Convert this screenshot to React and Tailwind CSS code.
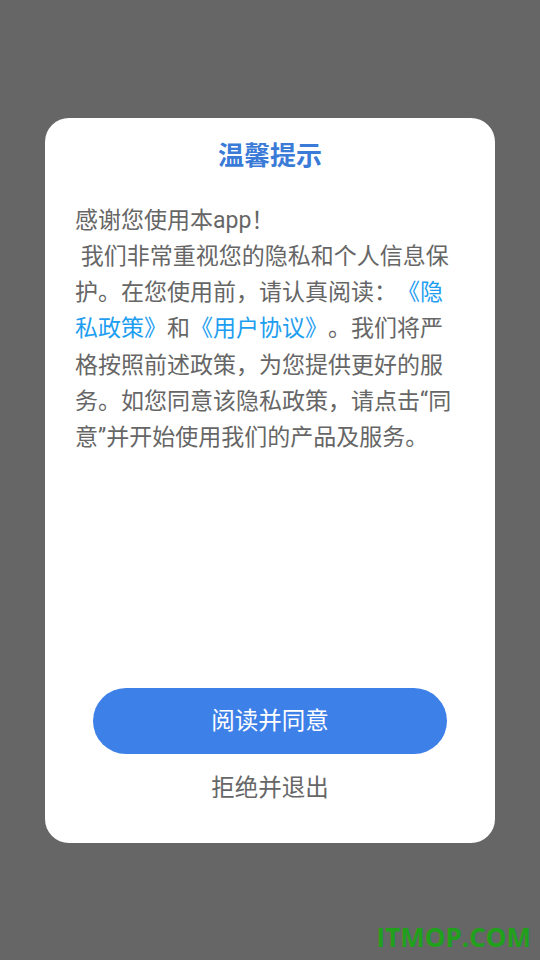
import React from "react";

export default function App() {
  const font = { fontFamily: 'Roboto, "Noto Sans CJK SC", sans-serif' };
  return (
    <div
      lang="zh-CN"
      className="relative w-[540px] h-[960px] bg-[#666666] flex items-center justify-center overflow-hidden [text-spacing-trim:space-all]"
      style={font}
    >
      <div className="w-[450px] h-[725px] bg-white rounded-[24px] flex flex-col px-[30px] pt-[21px] pb-[38px]">
        <h1 className="text-center text-[26px] leading-[34px] font-bold text-[#3a7bd8]">
          温馨提示
        </h1>
        <div className="flex-1 mt-[30px] text-[23px] leading-[36.3px] text-[#666666] [text-spacing-trim:space-all]">
          <p>感谢您使用本app！</p>
          <p>
            {"\u00a0"}我们非常重视您的隐私和个人信息保护。在您使用前，请认真阅读：
            <span className="text-[#1e9ef0]">《隐私政策》</span>和
            <span className="text-[#1e9ef0]">《用户协议》</span>
            。我们将严格按照前述政策，为您提供更好的服务。如您同意该隐私政策，请点击“同意”并开始使用我们的产品及服务。
          </p>
        </div>
        <button className="mx-[18px] h-[66px] rounded-full bg-[#3d80e8] text-white text-[23.5px] leading-[34px]">
          阅读并同意
        </button>
        <div className="mt-[17px] text-center text-[23.5px] leading-[34px] text-[#666666]">
          拒绝并退出
        </div>
      </div>
      <div
        className="absolute right-[9px] top-[919px] text-[26px] leading-[36px] font-bold text-[#21a01c]"
        style={{ fontFamily: '"Open Sans", sans-serif' }}
      >
        ITMOP.COM
      </div>
    </div>
  );
}
